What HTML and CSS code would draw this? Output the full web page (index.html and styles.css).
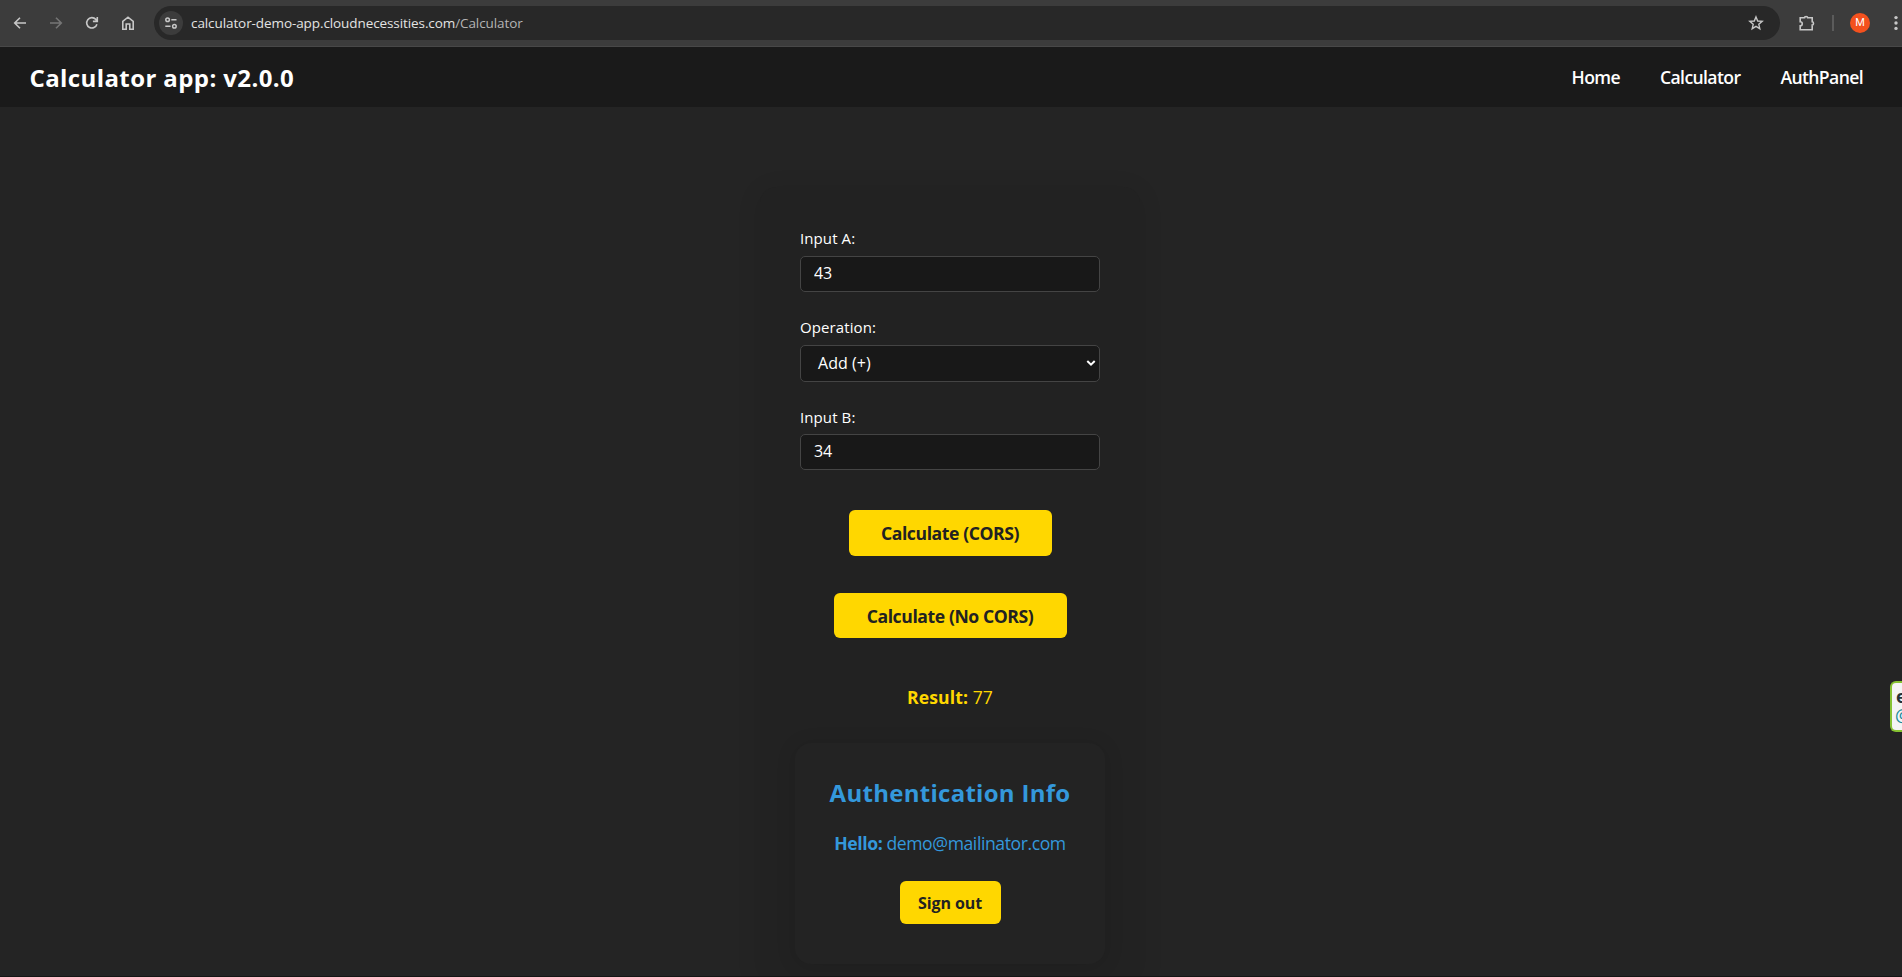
FILE: index.html
```html
<!DOCTYPE html>
<html lang="en">
<head>
<meta charset="utf-8">
<title>Calculator app</title>
<link rel="stylesheet" href="styles.css">
</head>
<body>
<div class="toolbar">
  <div class="nav-icons">
    <svg class="ic" viewBox="0 0 16 16"><path d="M14 8H3M8 2.7 2.7 8 8 13.3"/></svg>
    <svg class="ic dim" viewBox="0 0 16 16"><path d="M2 8h11M8 2.7 13.3 8 8 13.3"/></svg>
    <svg class="ic" viewBox="0 0 16 16"><path d="M12.9 9.2A5.2 5.2 0 1 1 11.8 4.4L13.2 6M13.3 2v4.4H8.9"/></svg>
    <svg class="ic" viewBox="0 0 16 16"><path d="M2.8 6.3 8 2.2l5.2 4.1v7.9H9.8V9H6.2v5.2H2.8z"/></svg>
  </div>
  <div class="omnibox">
    <span class="site"><svg class="ic small" viewBox="0 0 14 14"><circle cx="3.6" cy="3.7" r="1.8"/><path d="M7.3 3.7h5.2M1.3 10.3h5.2"/><circle cx="10.4" cy="10.3" r="1.8"/></svg></span>
    <span class="url">calculator-demo-app.cloudnecessities.com<span class="path">/Calculator</span></span>
    <svg class="ic star" viewBox="0 0 16 16"><path d="m8 1.9 1.7 4.1 4.5.4-3.4 2.9 1 4.4L8 11.4l-3.8 2.3 1-4.4L1.8 6.4 6.3 6z"/></svg>
  </div>
  <svg class="ic ext" viewBox="0 0 18 18"><path d="M2.2 3.7h4.3a1.6 1.2 0 0 1 3.2 0h4.5v4.1a1.3 1.6 0 0 1 0 3.2v4.7H2.2v-3.9a2 2 0 0 0 0-4.1z"/></svg>
  <span class="sep"></span>
  <span class="avatar">M</span>
  <svg class="dots" viewBox="0 0 4 16"><circle cx="2" cy="2.6" r="1.7"/><circle cx="2" cy="8" r="1.7"/><circle cx="2" cy="13.4" r="1.7"/></svg>
</div>
<header class="header">
  <h1 class="brand">Calculator app: v2.0.0</h1>
  <nav class="menu"><a>Home</a><a>Calculator</a><a>AuthPanel</a></nav>
</header>
<main class="main">
  <section class="card">
    <label class="label" for="a">Input A:</label>
    <input class="field" id="a" value="43">
    <label class="label">Operation:</label>
    <div class="select"><span>Add (+)</span><svg class="chev" viewBox="0 0 10 8"><path d="M1.3 2 5 5.6 8.7 2"/></svg></div>
    <label class="label last" for="b">Input B:</label>
    <input class="field" id="b" value="34">
    <button class="btn cors">Calculate (CORS)</button>
    <button class="btn nocors">Calculate (No CORS)</button>
    <p class="result"><b>Result:</b> <span>77</span></p>
    <div class="auth">
      <h2 class="auth-title">Authentication Info</h2>
      <p class="hello"><b>Hello:</b> <span>demo@mailinator.com</span></p>
      <button class="btn signout">Sign out</button>
    </div>
  </section>
</main>
<aside class="widget"><span class="w1">e</span><span class="w2">@</span></aside>
</body>
</html>
```
FILE: styles.css
```css
* { box-sizing: border-box; }
html { overflow: hidden; }
body { position: relative; margin: 0; height: 977px; overflow: hidden; display: flex; flex-direction: column; background: #242424; color: #fff; font-family: "Open Sans", "Noto Sans", sans-serif; }
.toolbar { height: 47px; flex: none; display: flex; align-items: center; background: #3c3c3c; border-bottom: 1px solid #484848; padding-left: 12px; white-space: nowrap; }
.nav-icons { display: flex; gap: 20px; width: 142px; flex: none; }
.ic { width: 16px; height: 16px; flex: none; fill: none; stroke: #c7c7c7; stroke-width: 1.6; }
.dim { stroke: #757575; }
.omnibox { width: 1626px; height: 34px; flex: none; border-radius: 17px; background: #282828; display: flex; align-items: center; padding-left: 5px; }
.site { width: 24px; height: 24px; border-radius: 50%; background: #3c3c3c; display: flex; align-items: center; justify-content: center; }
.small { width: 14px; height: 14px; stroke-width: 1.5; }
.url { margin-left: 8px; font-size: 13.5px; letter-spacing: -.09px; color: #e3e3e3; }
.path { color: #b4b4b4; }
.star { margin-left: auto; margin-right: 16px; stroke-width: 1.4; }
.ext { width: 18px; height: 18px; margin-left: 18px; }
.sep { width: 2px; height: 16px; background: #5b5b5b; margin-left: 16px; }
.avatar { width: 20px; height: 20px; border-radius: 50%; background: #f4511e; margin-left: 16px; font: 11px/20px Roboto, sans-serif; text-align: center; }
.dots { width: 4px; height: 16px; fill: #c7c7c7; margin-left: 24px; flex: none; }
.header { height: 60px; flex: none; background: #1a1a1a; display: flex; align-items: center; justify-content: space-between; padding: 0 39px 0 29.5px; }
.brand { margin: 0; padding-top: 2px; font-size: 24px; line-height: 32px; font-weight: 700; letter-spacing: .4px; }
.menu { display: flex; gap: 40px; font-size: 17.6px; line-height: 24px; font-weight: 600; letter-spacing: -.62px; }
.main { flex: 1; min-height: 0; overflow: hidden; display: flex; justify-content: center; padding: 80px 2px 0 0; border-bottom: 1px solid #151515; }
.card { width: 380px; flex: none; padding: 40px 0 0; background: #222; border-radius: 16px 16px 0 0; box-shadow: 0 4px 24px rgba(0,0,0,.1); display: flex; flex-direction: column; align-items: center; }
.label { width: 300px; flex: none; font-size: 15px; line-height: 22px; margin-bottom: 7px; letter-spacing: .1px; }
.last { margin-bottom: 6px; }
.field, .select { width: 300px; height: 36px; flex: none; margin: 0 0 24px; padding: 0 13px 2px; border: 1px solid #444; border-radius: 5px; background: #181818; color: #fff; font: 16px "Open Sans", sans-serif; letter-spacing: -.1px; }
.select { height: 37px; display: flex; align-items: center; justify-content: space-between; padding: 0 3px 2px 17px; letter-spacing: .05px; }
.chev { width: 10px; height: 8px; fill: none; stroke: #fff; stroke-width: 2; }
.btn { flex: none; border: 0; border-radius: 6px; background: #ffd700; color: #222; padding: 0; font: 700 17.6px "Open Sans", sans-serif; letter-spacing: -.42px; }
.cors { width: 203px; height: 46px; margin-top: 16px; }
.nocors { width: 233px; height: 45px; margin-top: 37px; }
.result { margin: 46px 0 0; font-size: 17.6px; line-height: 26px; color: #ffd700; letter-spacing: .1px; }
.auth { width: 310px; height: 221px; flex: none; margin-top: 33px; padding-top: 34px; border-radius: 16px; background: #232323; box-shadow: 0 2px 20px rgba(0,0,0,.12); display: flex; flex-direction: column; align-items: center; }
.auth-title { margin: 0; font-size: 24px; line-height: 32px; color: #3498db; letter-spacing: .28px; white-space: nowrap; }
.hello { margin: 22px 0 0; font-size: 17.6px; line-height: 24px; color: #3498db; letter-spacing: -.42px; white-space: nowrap; }
.signout { width: 101px; height: 43px; margin-top: 26px; font-size: 16px; letter-spacing: -.1px; }
.widget { position: absolute; right: 0; top: 681px; width: 12px; height: 51px; padding: 4px 0 0 4px; border: 2px solid #86c232; border-right: 0; border-radius: 6px 0 0 6px; background: #f4f4f4; color: #263238; font-size: 18px; line-height: 20px; overflow: hidden; display: flex; flex-direction: column; }
.w1 { font-weight: 700; line-height: 18px; }
.w2 { color: #168a9a; margin-left: -1px; }
```
